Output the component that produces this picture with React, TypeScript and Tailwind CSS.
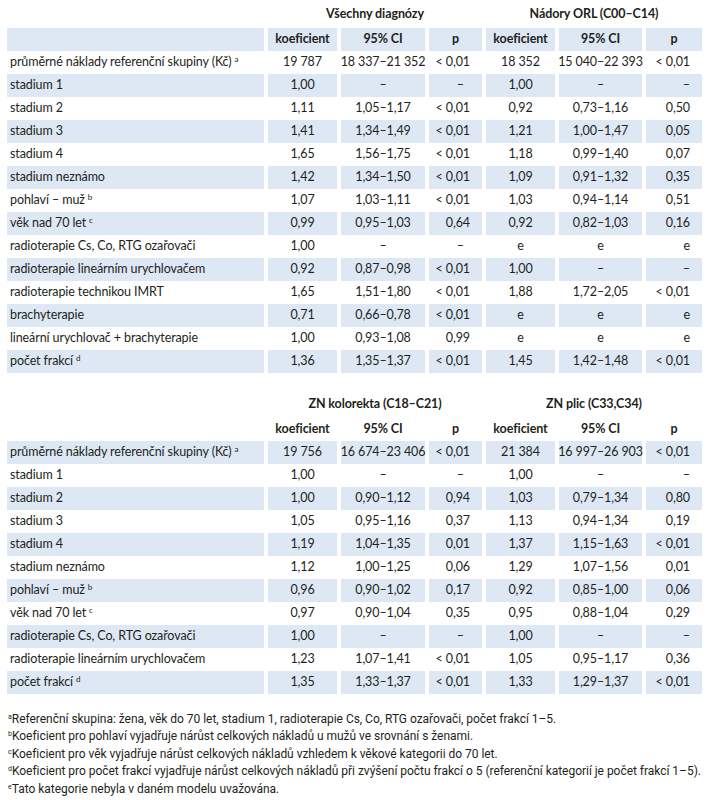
type Row = { label: string; sup?: string; v: string[] };

const table1: Row[] = [
  { label: 'průměrné náklady referenční skupiny (Kč)', sup: 'a', v: ['19 787', '18 337–21 352', '< 0,01', '18 352', '15 040–22 393', '< 0,01'] },
  { label: 'stadium 1', v: ['1,00', '–', '–', '1,00', '–', '–'] },
  { label: 'stadium 2', v: ['1,11', '1,05–1,17', '< 0,01', '0,92', '0,73–1,16', '0,50'] },
  { label: 'stadium 3', v: ['1,41', '1,34–1,49', '< 0,01', '1,21', '1,00–1,47', '0,05'] },
  { label: 'stadium 4', v: ['1,65', '1,56–1,75', '< 0,01', '1,18', '0,99–1,40', '0,07'] },
  { label: 'stadium neznámo', v: ['1,42', '1,34–1,50', '< 0,01', '1,09', '0,91–1,32', '0,35'] },
  { label: 'pohlaví – muž', sup: 'b', v: ['1,07', '1,03–1,11', '< 0,01', '1,03', '0,94–1,14', '0,51'] },
  { label: 'věk nad 70 let', sup: 'c', v: ['0,99', '0,95–1,03', '0,64', '0,92', '0,82–1,03', '0,16'] },
  { label: 'radioterapie Cs, Co, RTG ozařovači', v: ['1,00', '–', '–', 'e', 'e', 'e'] },
  { label: 'radioterapie lineárním urychlovačem', v: ['0,92', '0,87–0,98', '< 0,01', '1,00', '–', '–'] },
  { label: 'radioterapie technikou IMRT', v: ['1,65', '1,51–1,80', '< 0,01', '1,88', '1,72–2,05', '< 0,01'] },
  { label: 'brachyterapie', v: ['0,71', '0,66–0,78', '< 0,01', 'e', 'e', 'e'] },
  { label: 'lineární urychlovač + brachyterapie', v: ['1,00', '0,93–1,08', '0,99', 'e', 'e', 'e'] },
  { label: 'počet frakcí', sup: 'd', v: ['1,36', '1,35–1,37', '< 0,01', '1,45', '1,42–1,48', '< 0,01'] },
];

const table2: Row[] = [
  { label: 'průměrné náklady referenční skupiny (Kč)', sup: 'a', v: ['19 756', '16 674–23 406', '< 0,01', '21 384', '16 997–26 903', '< 0,01'] },
  { label: 'stadium 1', v: ['1,00', '–', '–', '1,00', '–', '–'] },
  { label: 'stadium 2', v: ['1,00', '0,90–1,12', '0,94', '1,03', '0,79–1,34', '0,80'] },
  { label: 'stadium 3', v: ['1,05', '0,95–1,16', '0,37', '1,13', '0,94–1,34', '0,19'] },
  { label: 'stadium 4', v: ['1,19', '1,04–1,35', '0,01', '1,37', '1,15–1,63', '< 0,01'] },
  { label: 'stadium neznámo', v: ['1,12', '1,00–1,25', '0,06', '1,29', '1,07–1,56', '0,01'] },
  { label: 'pohlaví – muž', sup: 'b', v: ['0,96', '0,90–1,02', '0,17', '0,92', '0,85–1,00', '0,06'] },
  { label: 'věk nad 70 let', sup: 'c', v: ['0,97', '0,90–1,04', '0,35', '0,95', '0,88–1,04', '0,29'] },
  { label: 'radioterapie Cs, Co, RTG ozařovači', v: ['1,00', '–', '–', '1,00', '–', '–'] },
  { label: 'radioterapie lineárním urychlovačem', v: ['1,23', '1,07–1,41', '< 0,01', '1,05', '0,95–1,17', '0,36'] },
  { label: 'počet frakcí', sup: 'd', v: ['1,35', '1,33–1,37', '< 0,01', '1,33', '1,29–1,37', '< 0,01'] },
];

// thousands separator as a quarter-em space, like the typeset original
const fmt = (s: string) => s.replace(/(\d) (\d)/g, '$1\u2005$2');

const grid = 'grid grid-cols-[257px_69px_84px_53px_69px_83px_56px] gap-x-[4px]';

function Cell({ blue, className = '', children }: { blue: boolean; className?: string; children?: React.ReactNode }) {
  return (
    <div className={`h-[23px] flex items-center ${blue ? 'bg-[#dde8f4]' : ''} ${className}`}>
      {children}
    </div>
  );
}

function Table({ titles, rows, headerBlue }: { titles: [string, string]; rows: Row[]; headerBlue: boolean }) {
  const heads = ['koeficient', '95% CI', 'p', 'koeficient', '95% CI', 'p'];
  return (
    <div>
      <div className={`${grid} h-[28px] items-center font-bold`}>
        <div />
        <div className="col-span-3 text-center">{titles[0]}</div>
        <div className="col-span-3 text-center">{titles[1]}</div>
      </div>
      <div className={grid}>
        <Cell blue={headerBlue} />
        {heads.map((h, i) => (
          <Cell key={i} blue={headerBlue} className="justify-center font-bold">
            {h}
          </Cell>
        ))}
      </div>
      {rows.map((r, ri) => {
        const blue = headerBlue ? ri % 2 === 1 : ri % 2 === 0;
        return (
          <div key={ri} className={grid}>
            <Cell blue={blue} className="pl-[3px] whitespace-nowrap">
              {r.label}
              {r.sup && <sup className="ml-[3px] text-[8px] -top-[4px]">{r.sup}</sup>}
            </Cell>
            {r.v.map((val, i) => {
              const pcol = i === 2 || i === 5;
              const align = pcol
                ? val === '–' && i === 2
                  ? 'justify-end pr-[18px]'
                  : 'justify-end pr-[12px]'
                : 'justify-center';
              return (
                <Cell key={i} blue={blue} className={`${align} whitespace-nowrap`}>
                  {fmt(val)}
                </Cell>
              );
            })}
          </div>
        );
      })}
    </div>
  );
}

const notes: [string, string][] = [
  ['a', 'Referenční skupina: žena, věk do 70 let, stadium 1, radioterapie Cs, Co, RTG ozařovači, počet frakcí 1–5.'],
  ['b', 'Koeficient pro pohlaví vyjadřuje nárůst celkových nákladů u mužů ve srovnání s ženami.'],
  ['c', 'Koeficient pro věk vyjadřuje nárůst celkových nákladů vzhledem k věkové kategorii do 70 let.'],
  ['d', 'Koeficient pro počet frakcí vyjadřuje nárůst celkových nákladů při zvýšení počtu frakcí o 5 (referenční kategorií je počet frakcí 1–5).'],
  ['e', 'Tato kategorie nebyla v daném modelu uvažována.'],
];

export default function App() {
  return (
    <div className="w-[707px] h-[800px] bg-white pl-[7px] text-[#231f20] text-[12.5px] tracking-[-0.1px] font-['Lato',sans-serif] leading-none">
      <Table titles={['Všechny diagnózy', 'Nádory ORL (C00–C14)']} rows={table1} headerBlue={true} />
      <div className="h-[17px]" />
      <Table titles={['ZN kolorekta (C18–C21)', 'ZN plic (C33,C34)']} rows={table2} headerBlue={false} />
      <div className="mt-[17px] pl-[1px] text-[12px] leading-[17.4px] font-['Liberation_Sans_Narrow','Roboto',sans-serif] tracking-[-0.03px]">
        {notes.map(([s, t]) => (
          <div key={s} className="whitespace-nowrap">
            <sup className="text-[7px] -top-[4px]">{s}</sup>
            {t}
          </div>
        ))}
      </div>
    </div>
  );
}
